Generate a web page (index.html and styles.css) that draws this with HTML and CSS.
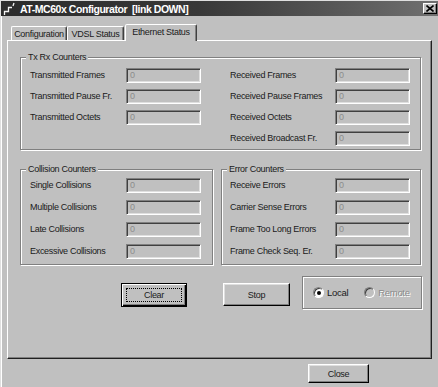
FILE: index.html
```html
<!DOCTYPE html>
<html>
<head>
<meta charset="utf-8">
<title>AT-MC60x Configurator</title>
<link rel="stylesheet" href="styles.css">
</head>
<body>
<div class="window">
  <div class="titlebar">
    <svg class="app-icon" width="16" height="15" viewBox="0 0 16 15">
      <polyline points="2.5,14 2.5,10.5 6.5,10.5 6.5,6.5 10,6.5" fill="none" stroke="#f4f4f4" stroke-width="1.3"/>
      <line x1="11" y1="5" x2="12" y2="2" stroke="#f4f4f4" stroke-width="1.3"/>
    </svg>
    <span class="title">AT-MC60x Configurator&nbsp; [link DOWN]</span>
    <div class="close-x">
      <svg width="8" height="7" viewBox="0 0 8 7"><path d="M0.5 0.5 L7.5 6.5 M7.5 0.5 L0.5 6.5" stroke="#000" stroke-width="1.6"/></svg>
    </div>
  </div>

  <div class="tabs">
    <div class="tab tab-config">Configuration</div>
    <div class="tab tab-vdsl">VDSL Status</div>
    <div class="tab tab-eth active">Ethernet Status</div>
  </div>

  <div class="panel">
    <div class="group group-txrx">
      <span class="group-title">Tx Rx Counters</span>
      <div class="cols">
        <div class="col col-left">
          <span class="lbl">Transmitted Frames</span><div class="field">0</div>
          <span class="lbl">Transmitted Pause Fr.</span><div class="field">0</div>
          <span class="lbl">Transmitted Octets</span><div class="field">0</div>
        </div>
        <div class="col col-right">
          <span class="lbl">Received Frames</span><div class="field">0</div>
          <span class="lbl">Received Pause Frames</span><div class="field">0</div>
          <span class="lbl">Received Octets</span><div class="field">0</div>
          <span class="lbl">Received Broadcast Fr.</span><div class="field">0</div>
        </div>
      </div>
    </div>

    <div class="group-row">
      <div class="group group-coll">
        <span class="group-title">Collision Counters</span>
        <div class="col col-left loose">
          <span class="lbl">Single Collisions</span><div class="field">0</div>
          <span class="lbl">Multiple Collisions</span><div class="field">0</div>
          <span class="lbl">Late Collisions</span><div class="field">0</div>
          <span class="lbl">Excessive Collisions</span><div class="field">0</div>
        </div>
      </div>
      <div class="group group-err">
        <span class="group-title">Error Counters</span>
        <div class="col col-right loose">
          <span class="lbl">Receive Errors</span><div class="field">0</div>
          <span class="lbl">Carrier Sense Errors</span><div class="field">0</div>
          <span class="lbl">Frame Too Long Errors</span><div class="field">0</div>
          <span class="lbl">Frame Check Seq. Er.</span><div class="field">0</div>
        </div>
      </div>
    </div>

    <div class="actions">
      <div class="btn btn-default btn-clear"><span class="focus">Clear</span></div>
      <div class="btn btn-stop">Stop</div>
      <div class="radio-box">
        <div class="radio-item">
          <span class="radio checked"></span><span class="radio-label">Local</span>
        </div>
        <div class="radio-item disabled">
          <span class="radio"></span><span class="radio-label">Remote</span>
        </div>
      </div>
    </div>
  </div>

  <div class="footer">
    <div class="btn btn-close">Close</div>
  </div>
</div>
</body>
</html>
```
FILE: styles.css
```css
html, body {
  margin: 0;
  padding: 0;
  width: 438px;
  height: 387px;
  overflow: hidden;
  background: #c0c0c0;
}

body {
  font-family: "Liberation Sans", Arial, sans-serif;
  font-size: 9px;
  letter-spacing: -0.3px;
  color: #1a1a1a;
}

.window {
  box-sizing: border-box;
  width: 438px;
  height: 387px;
  border-top: 1px solid #dfdfdf;
  border-left: 1px solid #dfdfdf;
  box-shadow: inset 1px 1px 0 #fff;
  background: #c0c0c0;
}

/* ---------- title bar ---------- */
.titlebar {
  height: 15px;
  display: flex;
  align-items: center;
  background: linear-gradient(to right, #2c2c2c 0%, #383838 45%, #555 75%, #707070 100%);
}

.app-icon {
  flex: none;
  margin-left: 1px;
}

.title {
  margin-left: 2px;
  color: #fff;
  font-weight: bold;
  font-size: 10.5px;
  letter-spacing: -0.45px;
  white-space: pre;
}

.close-x {
  margin-left: auto;
  margin-right: 1px;
  width: 14px;
  height: 11px;
  box-sizing: border-box;
  background: #c0c0c0;
  border: 1px solid;
  border-color: #fff #000 #000 #fff;
  box-shadow: inset -1px -1px 0 #808080;
  display: flex;
  align-items: center;
  justify-content: center;
}

/* ---------- tabs ---------- */
.tabs {
  margin-top: 8px;
  height: 16px;
  padding-left: 10px;
  display: flex;
  align-items: flex-end;
}

.tab {
  box-sizing: border-box;
  height: 14px;
  border: 1px solid;
  border-bottom: none;
  border-color: #fff #404040 transparent #fff;
  border-radius: 2px 2px 0 0;
  box-shadow: inset -1px 0 0 #808080;
  display: flex;
  align-items: center;
  justify-content: center;
  white-space: nowrap;
}

.tab-config { width: 56px; }
.tab-vdsl { width: 57px; }

.tab.active {
  width: 72px;
  height: 17px;
  margin-left: 1px;
  margin-bottom: -1px;
  padding-bottom: 2px;
  position: relative;
  z-index: 1;
  background: #c0c0c0;
}

/* ---------- panel ---------- */
.panel {
  box-sizing: border-box;
  margin-left: 6px;
  width: 425px;
  height: 319px;
  border: 1px solid;
  border-color: #fff #202020 #202020 #fff;
  box-shadow: inset -1px -1px 0 #808080;
  padding: 16px 0 0 12px;
}

/* ---------- group boxes ---------- */
.group {
  position: relative;
  box-sizing: border-box;
  border: 1px solid #808080;
  box-shadow: 1px 1px 0 #fff, inset 1px 1px 0 #fff;
}

.group-title {
  position: absolute;
  top: -6px;
  left: 5px;
  padding: 0 2px;
  line-height: 11px;
  background: #c0c0c0;
  white-space: nowrap;
}

.group-txrx {
  width: 401px;
  padding: 10px 10px 3px 9px;
}

.cols {
  display: flex;
  gap: 29px;
  align-items: flex-start;
}

.col {
  display: grid;
  row-gap: 6px;
  align-items: center;
}

.col.loose { row-gap: 7px; }

.col-left { grid-template-columns: 96px 75px; }
.col-right { grid-template-columns: 105px 75px; }

.lbl {
  white-space: nowrap;
  line-height: 15px;
}

.field {
  box-sizing: border-box;
  width: 75px;
  height: 15px;
  border: 1px solid;
  border-color: #808080 #fff #fff #808080;
  box-shadow: inset 1px 1px 0 #404040, inset -1px -1px 0 #dfdfdf;
  padding-left: 3px;
  line-height: 13px;
  color: #8c8c8c;
  font-size: 9px;
}

.group-row {
  margin-top: 19px;
  display: flex;
  gap: 8px;
}

.group-coll {
  width: 193px;
  padding: 8px 11px 5px 9px;
}

.group-err {
  width: 200px;
  padding: 8px 10px 5px 8px;
}

/* ---------- buttons ---------- */
.actions {
  margin-top: 11px;
  display: flex;
  align-items: flex-start;
}

.btn {
  box-sizing: border-box;
  background: #c0c0c0;
  border: 1px solid;
  border-color: #fff #000 #000 #fff;
  box-shadow: inset -1px -1px 0 #808080, inset 1px 1px 0 #dfdfdf;
  display: flex;
  align-items: center;
  justify-content: center;
  white-space: nowrap;
}

.btn-default {
  border: 1px solid #000;
  box-shadow: inset 1px 1px 0 #fff, inset -1px -1px 0 #000, inset -2px -2px 0 #808080;
}

.btn-clear {
  margin-left: 101px;
  margin-top: 7px;
  width: 66px;
  height: 24px;
  padding: 4px;
}

.focus {
  flex: 1;
  align-self: stretch;
  display: flex;
  align-items: center;
  justify-content: center;
  border: 1px dotted #000;
}

.btn-stop {
  margin-left: 36px;
  margin-top: 7px;
  width: 67px;
  height: 23px;
}

.radio-box {
  margin-left: 12px;
  box-sizing: border-box;
  width: 120px;
  height: 33px;
  border: 1px solid #808080;
  box-shadow: 1px 1px 0 #fff, inset 1px 1px 0 #fff;
  padding-left: 10px;
  display: flex;
  align-items: center;
  gap: 16px;
}

.radio-item {
  display: flex;
  align-items: center;
  gap: 3px;
}

.radio-label { font-size: 9.5px; }

.radio {
  position: relative;
  box-sizing: border-box;
  width: 11px;
  height: 11px;
  border-radius: 50%;
  border: 1px solid;
  border-color: #808080 #fff #fff #808080;
  box-shadow: inset 1px 1px 0 #404040;
  background: #fff;
}

.radio.checked::after {
  content: "";
  position: absolute;
  left: 3px;
  top: 3px;
  width: 4px;
  height: 4px;
  border-radius: 50%;
  background: #000;
}

.radio-item.disabled .radio {
  background: #c0c0c0;
}

.radio-item.disabled .radio-label {
  color: #8a8a8a;
  text-shadow: 1px 1px 0 #fff;
}

/* ---------- footer ---------- */
.footer {
  padding: 5px 0 0 307px;
}

.btn-close {
  width: 61px;
  height: 19px;
}
```
